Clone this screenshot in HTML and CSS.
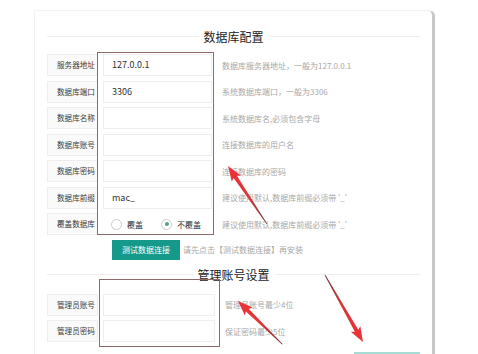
FILE: index.html
```html
<!DOCTYPE html>
<html lang="zh-CN">
<head>
    <meta charset="UTF-8" />
    <meta name="viewport" content="width=device-width, initial-scale=1.0" />
    <title>安装 - 数据库配置</title>
    <link rel="stylesheet" href="styles.css">
</head>
<body>
    <div class="install-card">
        <div class="legend"><span class="legend-line"></span><span class="legend-title">数据库配置</span><span class="legend-line"></span></div>

        <div class="form-row">
            <div class="form-label">服务器地址</div>
            <div class="form-input">127.0.0.1</div>
            <div class="form-help">数据库服务器地址，一般为127.0.0.1</div>
        </div>
        <div class="form-row">
            <div class="form-label">数据库端口</div>
            <div class="form-input">3306</div>
            <div class="form-help">系统数据库端口，一般为3306</div>
        </div>
        <div class="form-row">
            <div class="form-label">数据库名称</div>
            <div class="form-input"></div>
            <div class="form-help">系统数据库名,必须包含字母</div>
        </div>
        <div class="form-row">
            <div class="form-label">数据库账号</div>
            <div class="form-input"></div>
            <div class="form-help">连接数据库的用户名</div>
        </div>
        <div class="form-row">
            <div class="form-label">数据库密码</div>
            <div class="form-input"></div>
            <div class="form-help">连接数据库的密码</div>
        </div>
        <div class="form-row">
            <div class="form-label">数据库前缀</div>
            <div class="form-input">mac_</div>
            <div class="form-help">建议使用默认,数据库前缀必须带 '_'</div>
        </div>
        <div class="form-row">
            <div class="form-label">覆盖数据库</div>
            <div class="form-radios">
                <span class="radio"><i class="radio-dot"></i>覆盖</span>
                <span class="radio checked"><i class="radio-dot"></i>不覆盖</span>
            </div>
            <div class="form-help">建议使用默认,数据库前缀必须带 '_'</div>
        </div>

        <div class="test-row">
            <button class="btn">测试数据连接</button>
            <span class="form-help">请先点击【测试数据连接】再安装</span>
        </div>

        <div class="legend legend-admin"><span class="legend-line"></span><span class="legend-title">管理账号设置</span><span class="legend-line"></span></div>

        <div class="form-row">
            <div class="form-label">管理员账号</div>
            <div class="form-input wide"></div>
            <div class="form-help">管理员账号最少4位</div>
        </div>
        <div class="form-row">
            <div class="form-label">管理员密码</div>
            <div class="form-input wide"></div>
            <div class="form-help">保证密码最少5位</div>
        </div>

        <div class="submit-row">
            <button class="btn btn-next" aria-label="下一步"></button>
        </div>
    </div>

    <!-- screenshot annotations -->
    <div class="mark mark-db"></div>
    <div class="mark mark-admin"></div>
    <svg class="arrows" width="478" height="354" viewBox="0 0 478 354">
        <defs>
            <linearGradient id="arrowFill" x1="0" y1="0" x2="1" y2="0">
                <stop offset="0" stop-color="#ee3237" />
                <stop offset="0.55" stop-color="#d9363a" />
                <stop offset="1" stop-color="#6e3438" />
            </linearGradient>
        </defs>
        <g transform="translate(228 166) rotate(56.1)">
            <polygon points="0,0 15,-5.5 13,-2 70,-0.4 70,0.4 13,2 15,5.5" fill="url(#arrowFill)" />
        </g>
        <g transform="translate(238 301) rotate(44.3)">
            <polygon points="0,0 15,-5.5 13,-2 62,-0.4 62,0.4 13,2 15,5.5" fill="url(#arrowFill)" />
        </g>
        <g transform="translate(363 342) rotate(-119.6)">
            <polygon points="0,0 15,-5.5 13,-2 77,-0.4 77,0.4 13,2 15,5.5" fill="url(#arrowFill)" />
        </g>
    </svg>
</body>
</html>
```

FILE: styles.css
```css
body {
    margin: 0;
    background: #fff;
    font-family: "Noto Sans CJK SC", "Noto Sans", sans-serif;
    color: #333;
    overflow: hidden;
    height: 354px;
}

.install-card {
    margin: 10px 0 0 34px;
    width: 373px;
    height: 400px;
    padding: 14px 12px 0 12px;
    background: #fff;
    border-top: 1px solid #f2f2f2;
    border-left: 1px solid #f2f2f2;
    border-right: 3px solid #c8c8c8;
    border-radius: 0 6px 0 0;
}

.legend {
    display: flex;
    align-items: center;
    gap: 5px;
    height: 22px;
    margin-bottom: 7px;
}

.legend-line {
    flex: 1;
    border-top: 1px solid #eee;
}

.legend-title {
    font-size: 12px;
    color: #222;
}

.legend-admin {
    margin-top: 4px;
    margin-bottom: 8px;
}

.form-row {
    display: flex;
    align-items: center;
    height: 22px;
    margin-bottom: 4.5px;
}

.form-label {
    box-sizing: border-box;
    width: 51px;
    height: 22px;
    line-height: 20px;
    padding-left: 9px;
    border: 1px solid #eee;
    background: #fafafa;
    font-size: 7.6px;
    color: #3a3a3a;
    white-space: nowrap;
}

.form-input {
    box-sizing: border-box;
    width: 109px;
    height: 22px;
    line-height: 20px;
    margin-left: 5px;
    padding-left: 8px;
    border: 1px solid #eee;
    font-size: 9px;
    color: #333;
}

.form-input.wide {
    width: 112px;
}

.form-radios {
    display: flex;
    align-items: center;
    width: 109px;
    margin-left: 5px;
    padding-left: 8px;
    box-sizing: border-box;
    gap: 18px;
    font-size: 8px;
    color: #333;
}

.radio {
    display: flex;
    align-items: center;
    gap: 5px;
}

.radio-dot {
    box-sizing: border-box;
    width: 11px;
    height: 11px;
    border: 1px solid #ccc;
    border-radius: 50%;
    display: flex;
    align-items: center;
    justify-content: center;
}

.radio.checked .radio-dot::after {
    content: "";
    width: 4px;
    height: 4px;
    border-radius: 50%;
    background: #5a9e8c;
}

.form-help {
    margin-left: 10px;
    font-size: 8px;
    color: #a8a8a8;
    white-space: nowrap;
}

.test-row {
    display: flex;
    align-items: center;
    padding-left: 65px;
}

.test-row .form-help {
    margin-left: 3px;
}

.btn {
    height: 20px;
    padding: 0 10px;
    border: none;
    background: #14998a;
    color: #fff;
    font-family: inherit;
    font-size: 8px;
}

.submit-row {
    display: flex;
    justify-content: flex-end;
    margin-top: 10px;
}

.btn-next {
    width: 66px;
    background: #a6dcd4;
}

.mark {
    position: absolute;
    border: 1px solid #8e6a6a;
}

.mark-db {
    left: 97px;
    top: 52px;
    width: 115px;
    height: 181px;
}

.mark-admin {
    left: 99px;
    top: 279px;
    width: 119px;
    height: 66px;
}

.arrows {
    position: absolute;
    left: 0;
    top: 0;
}
```
